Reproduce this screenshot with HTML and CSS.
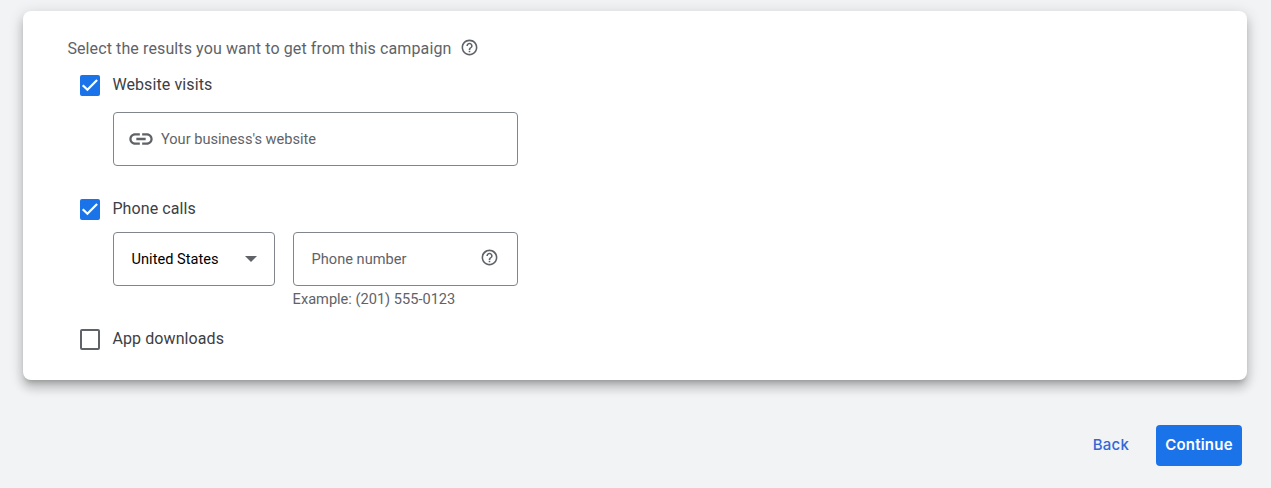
FILE: index.html
```html
<!DOCTYPE html>
<html lang="en">
<head>
<meta charset="utf-8">
<title>Campaign results</title>
<link rel="stylesheet" href="styles.css">
</head>
<body>
<svg width="0" height="0" class="defs">
  <symbol id="help" viewBox="0 0 24 24"><path d="M11 18h2v-2h-2v2zm1-16C6.480 2 2 6.480 2 12s4.480 10 10 10 10-4.480 10-10S17.520 2 12 2zm0 18c-4.410 0-8-3.590-8-8s3.590-8 8-8 8 3.590 8 8-3.590 8-8 8zm0-14c-2.210 0-4 1.790-4 4h2c0-1.100.9-2 2-2s2 .9 2 2c0 2-3 1.750-3 5h2c0-2.250 3-2.500 3-5 0-2.210-1.790-4-4-4z"/></symbol>
  <symbol id="check" viewBox="0 0 21 21"><path d="M2.800 10.500 7.600 15.100 17.500 5.200"/></symbol>
</svg>
<main class="card">
  <div class="heading"><span>Select the results you want to get from this campaign</span><svg class="help"><use href="#help"/></svg></div>
  <div class="option"><span class="box checked"><svg><use href="#check"/></svg></span><span class="label">Website visits</span></div>
  <div class="field website">
    <svg class="link" viewBox="0 0 24 24"><path d="M3.900 12c0-1.710 1.390-3.100 3.100-3.100h4V7H7c-2.760 0-5 2.240-5 5s2.240 5 5 5h4v-1.900H7c-1.710 0-3.100-1.390-3.100-3.100zM8 13h8v-2H8v2zm9-6h-4v1.900h4c1.710 0 3.100 1.390 3.100 3.100s-1.390 3.100-3.100 3.100h-4V17h4c2.760 0 5-2.240 5-5s-2.240-5-5-5z"/></svg>
    <span>Your business's website</span>
  </div>
  <div class="option"><span class="box checked"><svg><use href="#check"/></svg></span><span class="label">Phone calls</span></div>
  <div class="phone">
    <div class="field country"><span>United States</span><svg class="arrow" viewBox="0 0 12 6"><path d="M0 0h12L6 6z"/></svg></div>
    <div class="number">
      <div class="field tel"><span>Phone number</span><svg class="help"><use href="#help"/></svg></div>
      <div class="hint">Example: (201) 555-0123</div>
    </div>
  </div>
  <div class="option"><span class="box"></span><span class="label">App downloads</span></div>
</main>
<footer class="actions">
  <a class="back">Back</a>
  <a class="continue">Continue</a>
</footer>
</body>
</html>
```
FILE: styles.css
```css
* { box-sizing: border-box; }
body {
  margin: 0;
  height: 488px;
  padding: 11px 24px 0 23px;
  overflow: hidden;
  background: #f1f3f4;
  font-family: Roboto, sans-serif;
  color: #5f6368;
}
.defs { position: absolute; }
svg { display: block; flex: none; fill: #5f6368; }
.card {
  height: 369px;
  padding: 27px 44px 0;
  background: #fff;
  border-radius: 8px;
  box-shadow: 0 5px 5px -3px rgba(0,0,0,.2), 0 8px 10px 1px rgba(0,0,0,.14), 0 3px 14px 2px rgba(0,0,0,.12);
}
.heading {
  display: flex;
  align-items: center;
  height: 20px;
  gap: 9px;
  margin-bottom: 16px;
  padding-left: .4px;
  font-size: 16px;
  letter-spacing: .11px;
}
.help { width: 19px; height: 19px; margin-top: -2px; }
.option {
  display: flex;
  align-items: center;
  height: 22px;
  padding-left: 13px;
  gap: 12px;
}
.box {
  width: 20.400px;
  height: 20.500px;
  margin-top: .5px;
  border: 2px solid #5f6368;
  border-radius: 2px;
}
.box svg { width: 20.500px; height: 20.500px; fill: none; stroke: #fff; stroke-width: 2.3; }
.checked { border: 0; background: #1a73e8; }
.label { font-size: 16px; letter-spacing: .1px; color: #3c4043; margin-top: -2px; }
.field {
  display: flex;
  align-items: center;
  height: 54px;
  border: 1px solid #80868b;
  border-radius: 4px;
  font-size: 14.600px;
}
.website { width: 405px; margin: 16px 0 32px 46px; padding-left: 13px; gap: 6px; }
.link { width: 28px; height: 28px; }
.phone { display: flex; gap: 18px; height: 108px; padding: 12px 0 0 46px; }
.country { width: 162px; padding: 0 17px 0 17.600px; justify-content: space-between; color: #000; }
.arrow { width: 12px; height: 6px; }
.number { width: 225px; }
.tel { justify-content: space-between; padding: 0 17.600px; }
.tel .help { margin-top: -4px; }
.hint { margin: 4px 0 0 -.4px; font-size: 14.600px; line-height: 18px; }
.actions {
  display: flex;
  justify-content: flex-end;
  align-items: center;
  gap: 27px;
  margin-top: 45px;
  padding-right: 5px;
  font-family: Inter, sans-serif;
  font-size: 15px;
  letter-spacing: .2px;
}
.back { color: #3367d6; font-weight: 500; margin-top: -2px; }
.continue {
  width: 86px;
  height: 41px;
  border-radius: 4px;
  background: #1a73e8;
  color: #fff;
  font-weight: 600;
  line-height: 40px;
  text-align: center;
}
```
